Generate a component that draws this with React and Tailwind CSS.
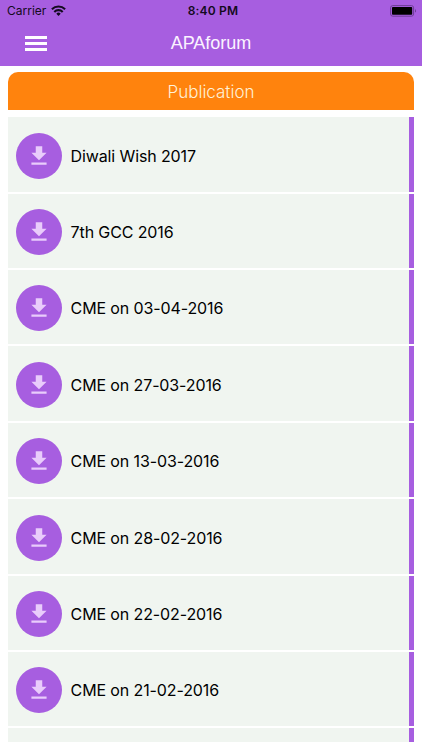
import { MdFileDownload } from 'react-icons/md';

const PUBLICATIONS = [
  { id: 1, title: 'Diwali Wish 2017' },
  { id: 2, title: '7th GCC 2016' },
  { id: 3, title: 'CME on 03-04-2016' },
  { id: 4, title: 'CME on 27-03-2016' },
  { id: 5, title: 'CME on 13-03-2016' },
  { id: 6, title: 'CME on 28-02-2016' },
  { id: 7, title: 'CME on 22-02-2016' },
  { id: 8, title: 'CME on 21-02-2016' },
  { id: 9, title: '' },
];

const WifiIcon = () => (
  <svg width="15" height="11" viewBox="0 0 15 11" fill="none" stroke="#140a20" strokeWidth="2.1">
    <path d="M0.9 4.2a9.4 9.4 0 0 1 13.2 0" />
    <path d="M3.3 6.9a5.9 5.9 0 0 1 8.4 0" />
    <path d="M7.5 10.9L5.3 8.7a3.1 3.1 0 0 1 4.4 0z" fill="#140a20" stroke="none" />
  </svg>
);

const BatteryIcon = () => (
  <svg width="27" height="12" viewBox="0 0 27 12">
    <rect x="0.6" y="0.6" width="23" height="10.6" rx="2.2" fill="none" stroke="#6d3d96" strokeWidth="1" />
    <rect x="2" y="2" width="20.2" height="7.8" rx="0.8" fill="#000" />
    <path d="M25 4.2c1.4 0.3 1.4 3.1 0 3.4z" fill="#6d3d96" />
  </svg>
);

const StatusBar = () => (
  <div className="grid h-[21px] grid-cols-3 items-center pl-[7px] pr-[5px] text-[#140a20]">
    <div className="flex items-center gap-[5px]">
      <span className="text-[12px] leading-none">Carrier</span>
      <WifiIcon />
    </div>
    <span className="pl-[2px] text-center text-[12px] font-semibold leading-none tracking-[0.2px]">8:40 PM</span>
    <div className="flex justify-end">
      <BatteryIcon />
    </div>
  </div>
);

const Header = () => (
  <header className="h-[65.5px] bg-[#a75ee0]">
    <StatusBar />
    <div className="grid h-[44px] grid-cols-[72px_1fr_72px] items-center">
      <button className="ml-[25px] flex w-[22px] flex-col gap-[3px]" aria-label="Menu">
        <span className="h-[3px] bg-white" />
        <span className="h-[3px] bg-white" />
        <span className="h-[3px] bg-white" />
      </button>
      <h1 className="text-center font-['Liberation_Sans',sans-serif] text-[18px] leading-none text-[#fbf3ff]">APAforum</h1>
    </div>
  </header>
);

const PublicationRow = ({ title }) => (
  <li className="flex h-[74.4px] shrink-0 items-start border-r-[5px] border-[#a75ee0] bg-[#f0f5f0] pl-[8px] pt-[15.4px]">
    <div className="flex h-[46px] w-[46px] items-center justify-center rounded-full bg-[#a75ee0]">
      <MdFileDownload size={26} className="text-[#e9ccfb]" />
    </div>
    <span className="ml-[9px] text-[16px] leading-[46px] tracking-[-0.12px] text-black">{title}</span>
  </li>
);

export default function App() {
  return (
    <div className="flex h-[750px] w-[422px] flex-col overflow-hidden bg-white font-['Inter',sans-serif]">
      <Header />
      <main className="mx-[7.6px] mt-[6.9px] flex h-[670px] flex-col overflow-hidden">
        <h2 className="h-[37.8px] shrink-0 rounded-t-[10px] bg-[#ff830d] text-center text-[17px] font-light leading-[40px] text-[#fff1d8]">
          Publication
        </h2>
        <ul className="mt-[7px] flex flex-col gap-[2px]">
          {PUBLICATIONS.map((item) => (
            <PublicationRow key={item.id} title={item.title} />
          ))}
        </ul>
      </main>
    </div>
  );
}
